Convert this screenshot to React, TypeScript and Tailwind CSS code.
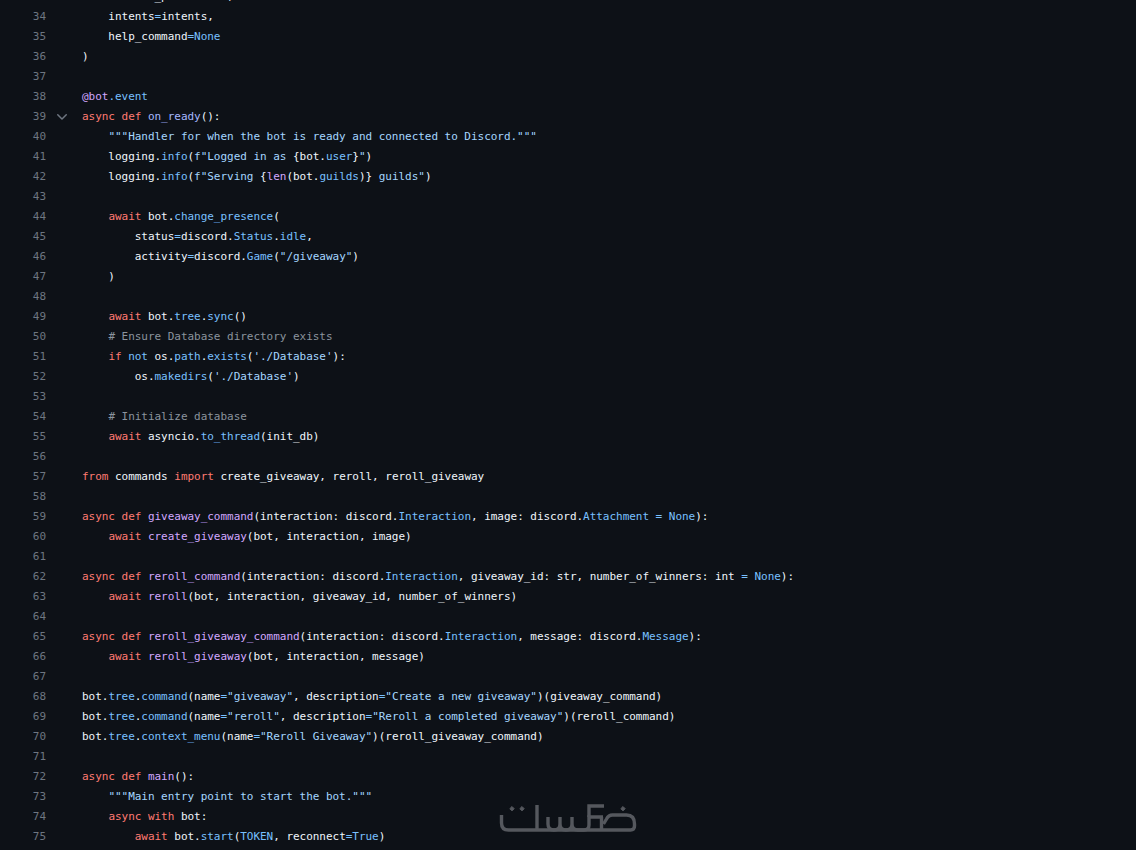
import React from 'react';

type Tok = [string, string?];

const K = 'text-[#ff7b72]';
const F = 'text-[#d2a8ff]';
const C = 'text-[#79c0ff]';
const S = 'text-[#a5d6ff]';
const G = 'text-[#8b949e]';

const lines: Tok[][] = [
  [['    command_prefix'], ['=', C], ['"!"', S], [',']],
  [['    intents'], ['=', C], ['intents,']],
  [['    help_command'], ['=None', C]],
  [[')']],
  [],
  [['@bot', F], ['.event', C]],
  [['async def ', K], ['on_ready', 'text-[#a5b8ff]'], ['():']],
  [['    '], ['"""Handler for when the bot is ready and connected to Discord."""', S]],
  [['    logging.'], ['info', C], ['('], ['f"Logged in as ', S], ['{bot.'], ['user', C], ['}'], ['"', S], [')']],
  [['    logging.'], ['info', C], ['('], ['f"Serving ', S], ['{'], ['len', F], ['(bot.'], ['guilds', C], [')}'], [' guilds"', S], [')']],
  [],
  [['    '], ['await ', K], ['bot.'], ['change_presence', C], ['(']],
  [['        status'], ['=', C], ['discord.'], ['Status', C], ['.'], ['idle', C], [',']],
  [['        activity'], ['=', C], ['discord.'], ['Game', C], ['('], ['"/giveaway"', S], [')']],
  [['    )']],
  [],
  [['    '], ['await ', K], ['bot.'], ['tree', C], ['.'], ['sync', C], ['()']],
  [['    '], ['# Ensure Database directory exists', G]],
  [['    '], ['if ', K], ['not ', C], ['os.'], ['path', C], ['.'], ['exists', C], ['('], ["'./Database'", S], ['):']],
  [['        os.'], ['makedirs', C], ['('], ["'./Database'", S], [')']],
  [],
  [['    '], ['# Initialize database', G]],
  [['    '], ['await ', K], ['asyncio.'], ['to_thread', C], ['(init_db)']],
  [],
  [['from ', K], ['commands '], ['import ', K], ['create_giveaway, reroll, reroll_giveaway']],
  [],
  [['async def ', K], ['giveaway_command', F], ['(interaction: discord.'], ['Interaction', C], [', image: discord.'], ['Attachment', C], [' = None', C], ['):']],
  [['    '], ['await ', K], ['create_giveaway', F], ['(bot, interaction, image)']],
  [],
  [['async def ', K], ['reroll_command', F], ['(interaction: discord.'], ['Interaction', C], [', giveaway_id: str, number_of_winners: int '], ['= None', C], ['):']],
  [['    '], ['await ', K], ['reroll', F], ['(bot, interaction, giveaway_id, number_of_winners)']],
  [],
  [['async def ', K], ['reroll_giveaway_command', F], ['(interaction: discord.'], ['Interaction', C], [', message: discord.'], ['Message', C], ['):']],
  [['    '], ['await ', K], ['reroll_giveaway', F], ['(bot, interaction, message)']],
  [],
  [['bot.'], ['tree', C], ['.'], ['command', C], ['(name'], ['=', C], ['"giveaway"', S], [', description'], ['=', C], ['"Create a new giveaway"', S], [')(giveaway_command)']],
  [['bot.'], ['tree', C], ['.'], ['command', C], ['(name'], ['=', C], ['"reroll"', S], [', description'], ['=', C], ['"Reroll a completed giveaway"', S], [')(reroll_command)']],
  [['bot.'], ['tree', C], ['.'], ['context_menu', C], ['(name'], ['=', C], ['"Reroll Giveaway"', S], [')(reroll_giveaway_command)']],
  [],
  [['async def ', K], ['main', F], ['():']],
  [['    '], ['"""Main entry point to start the bot."""', S]],
  [['    '], ['async with ', K], ['bot:']],
  [['        '], ['await ', K], ['bot.'], ['start', C], ['('], ['TOKEN', C], [', reconnect'], ['=True', C], [')']],
];

// site watermark, sits over the code
const Logo = () => (
  <svg width="138" height="32" viewBox="0 0 138 32" fill="none" stroke="#55585e" strokeWidth="3.4" className="absolute left-[499px] top-[802px]">
    <path d="M2.5 13v8q0 7 7 7h122q4 0 4-4v-2q0-9-8-9h-14q-4 0-6 4l-3 5" />
    <path d="M38 3v25M49 15v7q0 6 6 6t6-6v-7M61 22q0 6 6 6t6-6v-7M73 22q0 6 6 6h6q5 0 5-5v-8h14" />
    <path d="M105 4H90v11M102.5 15v13" />
    <path d="M13 4.5l2.2 2.2-2.2 2.2-2.2-2.2zM23 4.5l2.2 2.2-2.2 2.2-2.2-2.2zM124 4.5l2.2 2.2-2.2 2.2-2.2-2.2z" fill="#55585e" strokeWidth="1" />
  </svg>
);

export default function App() {
  return (
    <div className="relative h-[850px] overflow-hidden bg-[#0d1117] text-[#f0f6fc] font-['DejaVu_Sans_Mono',monospace] text-[11px] leading-5 tracking-[-0.03px]">
      <div className="-mt-[13px]">
        {lines.map((toks, i) => {
          const no = i + 33;
          return (
            <div key={no} className="flex h-5 whitespace-pre">
              <div className="w-[47px] pr-px text-right text-[#6e7681]">{no}</div>
              <div className="flex w-[35px] items-center pl-[7px]">
                {no === 39 && (
                  <svg width="16" height="16" viewBox="0 0 16 16" fill="#6e7681">
                    <path d="M12.78 5.22a.749.749 0 0 1 0 1.06l-4.25 4.25a.749.749 0 0 1-1.06 0L3.22 6.28a.749.749 0 1 1 1.06-1.06L8 8.939l3.72-3.719a.749.749 0 0 1 1.06 0Z" />
                  </svg>
                )}
              </div>
              <div>
                {toks.map((t, j) => (
                  <span key={j} className={t[1]}>{t[0]}</span>
                ))}
              </div>
            </div>
          );
        })}
      </div>
      <Logo />
    </div>
  );
}
